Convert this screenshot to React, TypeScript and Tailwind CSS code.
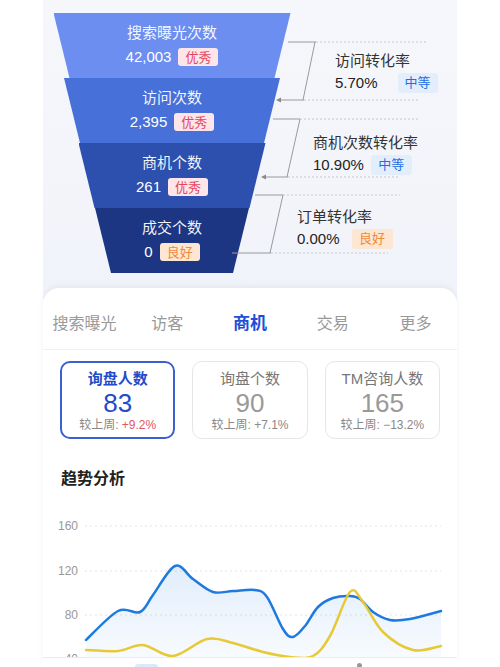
import React from 'react';

const FONT = '"Liberation Sans", "Noto Sans CJK SC", sans-serif';

type Pt = [number, number];

// catmull-rom -> bezier so the chart lines come out smooth
const smooth = (pts: Pt[]) => {
  let d = `M${pts[0][0]},${pts[0][1]}`;
  for (let i = 0; i < pts.length - 1; i++) {
    const p0 = pts[i - 1] || pts[i];
    const p1 = pts[i];
    const p2 = pts[i + 1];
    const p3 = pts[i + 2] || p2;
    const c1x = p1[0] + (p2[0] - p0[0]) / 6;
    const c1y = p1[1] + (p2[1] - p0[1]) / 6;
    const c2x = p2[0] - (p3[0] - p1[0]) / 6;
    const c2y = p2[1] - (p3[1] - p1[1]) / 6;
    d += ` C${c1x.toFixed(1)},${c1y.toFixed(1)} ${c2x.toFixed(1)},${c2y.toFixed(1)} ${p2[0]},${p2[1]}`;
  }
  return d;
};

const BLUE: Pt[] = [
  [86, 641], [118, 612], [140, 613], [153, 596], [175, 567], [193, 580], [213, 593],
  [233, 592], [255, 591], [267, 598], [283, 630], [293, 638], [305, 627], [318, 608],
  [333, 599], [350, 597], [360, 600], [373, 613], [390, 621], [410, 620], [441, 612],
];

const YELLOW: Pt[] = [
  [86, 651], [118, 652], [143, 646], [173, 657], [207, 640], [233, 644], [263, 653],
  [290, 658], [313, 657], [330, 637], [350, 593], [363, 603], [383, 633], [413, 651], [441, 647],
];

const FUNNEL = [
  { name: '搜索曝光次数', value: '42,003', tag: '优秀', w: 'w-[237px]', bg: 'bg-[#6b8ef0]', warm: false },
  { name: '访问次数', value: '2,395', tag: '优秀', w: 'w-[216px]', bg: 'bg-[#4770d9]', warm: false },
  { name: '商机个数', value: '261', tag: '优秀', w: 'w-[187px]', bg: 'bg-[#2d50ae]', warm: false },
  { name: '成交个数', value: '0', tag: '良好', w: 'w-[154px]', bg: 'bg-[#1d3684]', warm: true },
];

const TABS = ['搜索曝光', '访客', '商机', '交易', '更多'];

const Badge: React.FC<{ text: string; kind: 'red' | 'blue' | 'orange' }> = ({ text, kind }) => {
  const cls =
    kind === 'red'
      ? 'bg-[#fde5e9] text-[#e2465f]'
      : kind === 'blue'
      ? 'bg-[#e3eefc] text-[#1f6fe0]'
      : 'bg-[#fde6d2] text-[#ef8a3b]';
  return (
    <span className={`inline-flex items-center justify-center h-[18px] px-[7px] rounded-[3px] text-[13px] leading-none ${cls}`}>
      {text}
    </span>
  );
};

const Connectors: React.FC = () => (
  <svg className="absolute inset-0 pointer-events-none" width="414" height="300" viewBox="43 0 414 300">
    <g stroke="#9a9a9a" strokeWidth="1" fill="none">
      <line x1="288" y1="42" x2="316" y2="42" />
      <line x1="315" y1="42" x2="303" y2="100" />
      <line x1="279" y1="100" x2="304" y2="100" />
      <line x1="273" y1="119" x2="300" y2="119" />
      <line x1="300" y1="119" x2="287" y2="177" />
      <line x1="264" y1="177" x2="288" y2="177" />
      <line x1="255" y1="195" x2="283" y2="195" />
      <line x1="283" y1="195" x2="270" y2="253" />
      <line x1="232" y1="253" x2="271" y2="253" />
    </g>
    <g stroke="#c8c8c8" strokeWidth="1" strokeDasharray="2 2" fill="none">
      <line x1="316" y1="42" x2="427" y2="42" />
      <line x1="304" y1="100" x2="418" y2="100" />
      <line x1="300" y1="119" x2="418" y2="119" />
      <line x1="288" y1="177" x2="400" y2="177" />
      <line x1="283" y1="195" x2="400" y2="195" />
      <line x1="271" y1="253" x2="388" y2="253" />
    </g>
    <path d="M276,100 L281,97.5 L281,102.5 Z" fill="#8a8a8a" />
    <path d="M261,177 L266,174.5 L266,179.5 Z" fill="#8a8a8a" />
  </svg>
);

const Chart: React.FC = () => {
  const blue = smooth(BLUE);
  const area = `${blue} L441,662 L86,662 Z`;
  const grid = [
    { y: 527, label: '160' },
    { y: 572, label: '120' },
    { y: 616, label: '80' },
    { y: 660, label: '40' },
  ];
  return (
    <svg width="414" height="150" viewBox="43 515 414 150" className="block">
      <defs>
        <linearGradient id="blueFill" x1="0" y1="0" x2="0" y2="1">
          <stop offset="0" stopColor="#2a82e4" stopOpacity="0.14" />
          <stop offset="1" stopColor="#2a82e4" stopOpacity="0.03" />
        </linearGradient>
      </defs>
      {grid.map((g) => (
        <g key={g.label}>
          <line x1="85" y1={g.y} x2="441" y2={g.y} stroke="#e4e4e4" strokeWidth="1" strokeDasharray="2 3" />
          <text x="78" y={g.y + 4} textAnchor="end" fontSize="12" fill="#999" fontFamily={FONT}>
            {g.label}
          </text>
        </g>
      ))}
      <path d={area} fill="url(#blueFill)" />
      <path d={blue} fill="none" stroke="#1f7ae0" strokeWidth="2.5" strokeLinecap="round" />
      <path d={smooth(YELLOW)} fill="none" stroke="#e7c936" strokeWidth="2.5" strokeLinecap="round" />
    </svg>
  );
};

export default function App() {
  return (
    <div className="relative w-[500px] h-[667px] overflow-hidden bg-white" style={{ fontFamily: FONT }}>
      <div className="ml-[43px] w-[414px]">
        {/* funnel panel */}
        <div className="relative h-[300px] bg-gradient-to-b from-[#f6f7fb] to-[#f1f3fa] flex">
          <div className="pt-[13px] pl-[10px] w-[248px] flex flex-col items-center">
            {FUNNEL.map((f) => (
              <div
                key={f.name}
                className={`${f.w} ${f.bg} h-[65px] flex flex-col items-center pt-[10px] text-white [clip-path:polygon(0_0,100%_0,calc(100%-16px)_100%,16px_100%)]`}
              >
                <div className="text-[15px] leading-[20px] text-white/95">{f.name}</div>
                <div className="mt-[4px] h-[20px] flex items-center gap-[7px]">
                  <span className="text-[15px] leading-[20px]">{f.value}</span>
                  <Badge text={f.tag} kind={f.warm ? 'orange' : 'red'} />
                </div>
              </div>
            ))}
          </div>
          <div className="pt-[51px] flex flex-col text-[#333]">
            <div className="ml-[44px]">
              <div className="text-[15px] leading-[20px]">访问转化率</div>
              <div className="mt-[1px] h-[22px] flex items-center gap-[20px]">
                <span className="text-[15px] text-[#222]">5.70%</span>
                <span className="inline-flex items-center justify-center h-[20px] w-[40px] rounded-[3px] text-[13px] bg-[#e3eefc] text-[#1f6fe0]">中等</span>
              </div>
            </div>
            <div className="ml-[22px] mt-[39px]">
              <div className="text-[15px] leading-[20px]">商机次数转化率</div>
              <div className="mt-[1px] h-[22px] flex items-center gap-[7px]">
                <span className="text-[15px] text-[#222]">10.90%</span>
                <span className="inline-flex items-center justify-center h-[20px] w-[41px] rounded-[3px] text-[13px] bg-[#e3eefc] text-[#1f6fe0]">中等</span>
              </div>
            </div>
            <div className="ml-[6px] mt-[31px]">
              <div className="text-[15px] leading-[20px]">订单转化率</div>
              <div className="mt-[1px] h-[22px] flex items-center gap-[12px]">
                <span className="text-[15px] text-[#222]">0.00%</span>
                <span className="inline-flex items-center justify-center h-[20px] w-[41px] rounded-[3px] text-[13px] bg-[#fde6d2] text-[#ef8a3b]">良好</span>
              </div>
            </div>
          </div>
          <Connectors />
        </div>

        {/* white card */}
        <div className="relative -mt-[12px] bg-white rounded-t-[16px] shadow-[0_-2px_6px_rgba(0,0,0,0.05)]">
          <div className="h-[62px] grid grid-cols-5 items-end pb-[13px] border-b border-[#f0f0f0]">
            {TABS.map((t) => (
              <div
                key={t}
                className={`text-center leading-[24px] ${
                  t === '商机' ? 'text-[17px] font-bold text-[#1d4fd6]' : 'text-[16px] text-[#999]'
                }`}
              >
                {t}
              </div>
            ))}
          </div>

          <div className="pt-[11px] px-[17px] grid grid-cols-3 gap-[17px]">
            <div className="h-[78px] rounded-[10px] border-2 border-[#3c60d2] flex flex-col items-center pt-[6px]">
              <div className="text-[15px] leading-[20px] font-bold text-[#1f4cc9]">询盘人数</div>
              <div className="text-[26px] leading-[28px] text-[#1f4cc9]">83</div>
              <div className="text-[12px] leading-[16px] text-[#888]">
                较上周: <span className="text-[#e0566a]">+9.2%</span>
              </div>
            </div>
            <div className="h-[78px] rounded-[10px] border border-[#e6e6e6] flex flex-col items-center pt-[7px]">
              <div className="text-[15px] leading-[20px] text-[#777]">询盘个数</div>
              <div className="text-[26px] leading-[28px] text-[#999]">90</div>
              <div className="text-[12px] leading-[16px] text-[#888]">较上周: +7.1%</div>
            </div>
            <div className="h-[78px] rounded-[10px] border border-[#e6e6e6] flex flex-col items-center pt-[7px]">
              <div className="text-[15px] leading-[20px] text-[#777]">TM咨询人数</div>
              <div className="text-[26px] leading-[28px] text-[#999]">165</div>
              <div className="text-[12px] leading-[16px] text-[#888]">较上周: −13.2%</div>
            </div>
          </div>

          <div className="mt-[28px] pl-[18px] text-[16px] leading-[24px] font-bold text-[#222]">趋势分析</div>

          <div className="mt-[23px]">
            <Chart />
          </div>
        </div>
      </div>

      {/* bottom bar peeking in */}
      <div className="absolute left-[43px] top-[657px] w-[414px] h-[20px] bg-white border-t border-[#ececec]">
        <div className="absolute left-[92px] top-[6px] w-[23px] h-[8px] rounded-t-[3px] bg-[#dde9fb]" />
        <div className="absolute left-[314px] top-[5px] w-[5px] h-[5px] rounded-full bg-[#999]" />
      </div>
    </div>
  );
}
